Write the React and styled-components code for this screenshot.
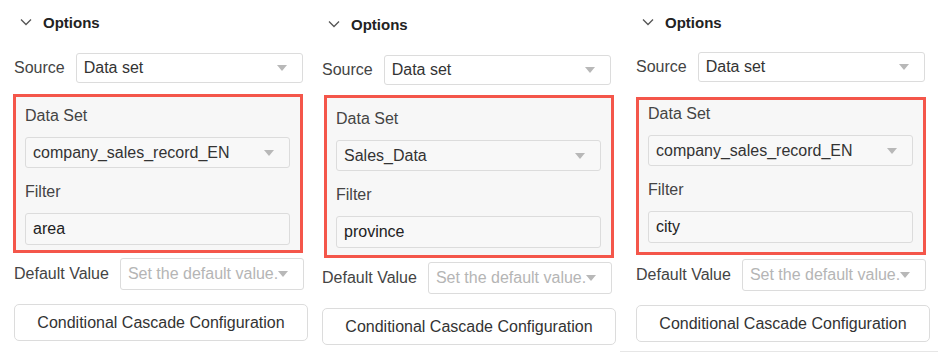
import React from "react";
import styled, { createGlobalStyle } from "styled-components";

const GlobalStyle = createGlobalStyle`
  body {
    margin: 0;
    background: #fff;
    font-family: "Liberation Sans", Arial, sans-serif;
    color: #333;
  }
`;

const Row = styled.div`
  display: flex;
  width: 938px;
  height: 352px;
  overflow: hidden;
`;

const Panel = styled.div`
  width: ${(p) => p.$width}px;
  padding-left: ${(p) => p.$left}px;
  padding-top: ${(p) => p.$top}px;
  box-sizing: border-box;
  display: flex;
  flex-direction: column;
  align-items: flex-start;
  ${(p) =>
    p.$underline &&
    `
    height: 352px;
    border-bottom: 1px solid #e6e6e6;
  `}
`;

const Header = styled.div`
  display: flex;
  align-items: center;
  height: 44px;
  padding-left: 6px;
  gap: 11px;
  font-size: 15px;
  font-weight: bold;
  color: #222;
  margin-bottom: ${(p) => p.$gap}px;
`;

const FieldRow = styled.div`
  display: flex;
  align-items: center;
  gap: 11px;
  font-size: 16px;
  color: #444;
  white-space: nowrap;
`;

const Select = styled.div`
  box-sizing: border-box;
  width: ${(p) => p.$width}px;
  height: ${(p) => p.$height || 31}px;
  border: 1px solid #dcdcdc;
  border-radius: 3px;
  background: ${(p) => (p.$muted ? "#f8f8f8" : "#fff")};
  display: flex;
  align-items: center;
  justify-content: ${(p) => (p.$placeholder ? "flex-start" : "space-between")};
  padding: 0 ${(p) => (p.$placeholder ? 9 : 15)}px 0 7px;
  font-size: 16px;
  color: ${(p) => (p.$placeholder ? "#b5b5b5" : "#333")};
  white-space: nowrap;
  overflow: hidden;
`;

const Clip = styled.span`
  overflow: hidden;
  flex: 0 1 auto;
  min-width: 0;
`;

const Caret = styled.span`
  flex: none;
  width: 0;
  height: 0;
  border-left: 5px solid transparent;
  border-right: 5px solid transparent;
  border-top: 6px solid #b8b8b8;
  margin-left: ${(p) => (p.$tight ? 0 : 8)}px;
`;

const Highlight = styled.div`
  box-sizing: border-box;
  width: 290px;
  margin: ${(p) => p.$gap}px 0 ${(p) => p.$after}px ${(p) => p.$shift}px;
  border: 3px solid #f4564a;
  background: #f7f7f7;
  padding: ${(p) => p.$padTop}px 9px ${(p) => p.$padBottom}px 9px;
  display: flex;
  flex-direction: column;
`;

const Label = styled.div`
  font-size: 16px;
  color: #444;
  height: 24px;
  line-height: 24px;
  margin-top: ${(p) => p.$above || 0}px;
  margin-bottom: ${(p) => p.$gap}px;
`;

const Input = styled.div`
  box-sizing: border-box;
  width: 265px;
  height: 32px;
  border: 1px solid #dcdcdc;
  border-radius: 3px;
  background: #f8f8f8;
  display: flex;
  align-items: center;
  padding: 0 7px;
  font-size: 16px;
  color: #222;
`;

const Button = styled.div`
  box-sizing: border-box;
  width: 294px;
  height: 37px;
  margin-top: 14px;
  border: 1px solid #dcdcdc;
  border-radius: 5px;
  background: #fff;
  display: flex;
  align-items: center;
  justify-content: center;
  font-size: 16px;
  color: #333;
`;

const Chevron = () => (
  <svg width="12" height="8" viewBox="0 0 12 8">
    <path d="M1 1.5 L6 6.5 L11 1.5" fill="none" stroke="#555" strokeWidth="1.3" />
  </svg>
);

const panels = [
  {
    width: 310, left: 14, top: 0, headGap: 9, boxGap: 11, shift: -1,
    padTop: 7, padBottom: 5, after: 5,
    dataset: "company_sales_record_EN", filter: "area",
  },
  {
    width: 310, left: 12, top: 2, headGap: 9, boxGap: 10, shift: 2,
    padTop: 9, padBottom: 7, after: 4,
    dataset: "Sales_Data", filter: "province",
  },
  {
    width: 318, left: 16, top: -2, headGap: 8, boxGap: 15, shift: 0,
    padTop: 2, padBottom: 9, after: 4,
    dataset: "company_sales_record_EN", filter: "city", underline: true,
  },
];

const OptionsPanel = ({ cfg }) => (
  <Panel $width={cfg.width} $left={cfg.left} $top={cfg.top} $underline={cfg.underline}>
    <Header $gap={cfg.headGap}>
      <Chevron />
      Options
    </Header>
    <FieldRow>
      Source
      <Select $width={227} $height={30}>
        Data set
        <Caret />
      </Select>
    </FieldRow>
    <Highlight
      $gap={cfg.boxGap}
      $after={cfg.after}
      $shift={cfg.shift}
      $padTop={cfg.padTop}
      $padBottom={cfg.padBottom}
    >
      <Label $gap={9}>Data Set</Label>
      <Select $width={265} $muted>
        {cfg.dataset}
        <Caret />
      </Select>
      <Label $above={12} $gap={9}>
        Filter
      </Label>
      <Input>{cfg.filter}</Input>
    </Highlight>
    <FieldRow>
      Default Value
      <Select $width={184} $height={32} $placeholder>
        <Clip>Set the default value.</Clip>
        <Caret $tight />
      </Select>
    </FieldRow>
    <Button>Conditional Cascade Configuration</Button>
  </Panel>
);

export default function App() {
  return (
    <>
      <GlobalStyle />
      <Row>
        {panels.map((cfg, i) => (
          <OptionsPanel key={i} cfg={cfg} />
        ))}
      </Row>
    </>
  );
}
